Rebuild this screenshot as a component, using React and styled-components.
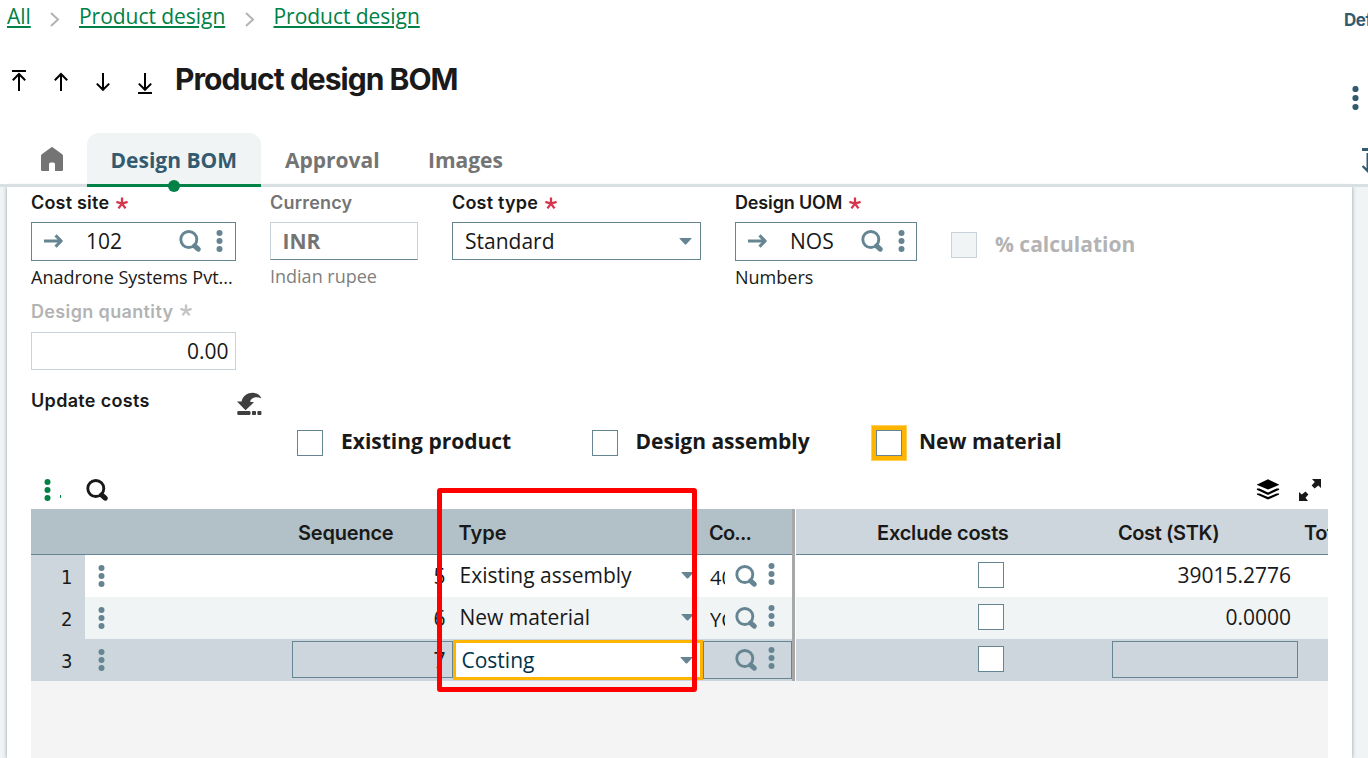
import React from "react";
import styled, { createGlobalStyle, css } from "styled-components";

const c = {
  ink: "#191919",
  slate: "#668592",
  deep: "#335b70",
  green: "#008146",
  line: "#d9e0e4",
  mist: "#f0f4f5",
  pale: "#cdd6dc",
  steel: "#b2c1c8",
  amber: "#ffb500",
  mute: "#747474",
  faint: "#b3b3b3",
};
const head = `Inter, "Liberation Sans", sans-serif`;
const body = `"Open Sans", "Noto Sans", sans-serif`;

const GlobalStyle = createGlobalStyle`
  * { box-sizing: border-box; }
  html, body { margin: 0; padding: 0; overflow: hidden; background: #fff; }
  body { font-family: ${body}; color: ${c.ink}; font-size: 21px; }
  svg { display: block; flex: none; }
`;

const Page = styled.div`
  position: relative;
  width: 1368px;
  height: 758px;
  overflow: hidden;
  display: flex;
  flex-direction: column;
  white-space: nowrap;
`;

/* ---------- header ---------- */
const Breadcrumbs = styled.nav`
  display: flex;
  height: 32px;
  padding-left: 7px;
  line-height: 32px;
  flex: none;
`;
const Crumb = styled.a`
  color: ${c.green};
  font-size: 21px;
  letter-spacing: -0.04px;
  width: ${(p) => p.$w}px;
  text-decoration: underline;
  text-decoration-thickness: 2px;
  text-underline-offset: 2px;
  text-decoration-skip-ink: auto;
`;
const CrumbArrow = styled.span`
  width: ${(p) => p.$w}px;
  padding: 12px 0 0 ${(p) => p.$pl}px;
`;
const HeaderLink = styled.span`
  margin-left: auto;
  width: 24px;
  overflow: hidden;
  font: 700 17px/40px ${head};
  letter-spacing: -0.5px;
  height: 39px;
  color: ${c.deep};
`;
const TitleRow = styled.header`
  display: flex;
  align-items: flex-start;
  height: 101px;
  flex: none;
  padding: 27px 9px 0 12px;
`;
const NavArrows = styled.div`
  display: flex;
  gap: 28px;
  padding-top: 11px;
  width: 163px;
`;
const Title = styled.h1`
  margin: 0;
  font: 700 30px/40px ${head};
  letter-spacing: -0.97px;
  color: #1a1a1a;
`;
const TitleMenu = styled.div`
  margin: 27px 0 0 auto;
`;

const TabBar = styled.div`
  display: flex;
  height: 54px;
  flex: none;
  border-bottom: 3px solid ${c.line};
  position: relative;
  z-index: 2;
`;
const HomeTab = styled.div`
  width: 87px;
  padding: 14px 0 0 41px;
`;
const Tab = styled.div`
  position: relative;
  width: ${(p) => p.$w}px;
  height: 54px;
  padding: 2px 0 0 ${(p) => p.$pad}px;
  line-height: 51px;
  font-weight: 700;
  font-size: 21px;
  color: ${c.mute};
  ${(p) =>
    p.$active &&
    css`
      color: ${c.deep};
      background: ${c.mist};
      border-radius: 12px 12px 0 0;
      box-shadow: inset 0 -3px 0 ${c.green};
      &::after {
        content: "";
        position: absolute;
        left: 81px;
        bottom: -5px;
        width: 12px;
        height: 12px;
        border-radius: 50%;
        background: ${c.green};
      }
    `}
`;
const TabTool = styled.div`
  margin-left: auto;
  width: 6px;
  padding-top: 15px;
  overflow: hidden;
`;

/* ---------- card ---------- */
const Body = styled.main`
  flex: 1;
  background: ${c.mist};
  padding: 0 16px 0 7px;
  min-height: 0;
`;
const Card = styled.section`
  height: 571px;
  background: #fff;
  padding: 0 24px;
  box-shadow: 0 0 4px rgba(0, 30, 50, 0.42);
  display: flex;
  flex-direction: column;
`;
const FieldRow = styled.div`
  display: flex;
  height: ${(p) => p.$h}px;
  flex: none;
`;
const Field = styled.div`
  width: ${(p) => p.$w}px;
  margin-right: ${(p) => p.$mr || 0}px;
`;
const Label = styled.div`
  font: 600 18px/${(p) => p.$lh || 31}px ${head};
  margin-bottom: ${(p) => p.$mb ?? 4}px;
  letter-spacing: ${(p) => p.$ls ?? 0.2}px;
  color: ${(p) => p.$color || c.ink};
  display: flex;
  gap: 7px;
`;
const Box = styled.div`
  display: flex;
  align-items: center;
  height: ${(p) => (p.$lookup ? 39 : 38)}px;
  border: 1px solid ${(p) => (p.$light ? "#c9d2d7" : c.slate)};
  border-bottom-color: ${(p) => (p.$underline ? c.slate : undefined)};
  background: #fff;
  padding: 0 ${(p) => p.$pr ?? 12}px ${(p) => (p.$lookup ? 1 : 0)}px 11.5px;
`;
const Value = styled.span`
  font-size: 21px;
  line-height: 30px;
  font-weight: ${(p) => (p.$bold ? 700 : 400)};
  color: ${(p) => p.$color || c.ink};
  margin-left: ${(p) => p.$ml || 0}px;
`;
const BoxTools = styled.span`
  display: flex;
  align-items: center;
  gap: 15.5px;
  margin-left: auto;
`;
const Hint = styled.div`
  font-size: 18px;
  line-height: 33px;
  color: ${(p) => p.$color || c.ink};
`;
const CheckBox = styled.span`
  width: 26px;
  height: 26px;
  flex: none;
  border: 1px solid ${(p) => (p.$off ? "#c9d2d9" : c.slate)};
  background: ${(p) => (p.$off ? c.mist : "#fff")};
  box-shadow: ${(p) => (p.$focus ? `0 0 0 4px ${c.amber}, 0 0 0 5px #ffcf57` : "none")};
`;
const CheckLabel = styled.span`
  font-weight: 700;
  font-size: 21px;
  line-height: 34px;
  color: ${(p) => p.$color || c.ink};
  margin-left: ${(p) => p.$ml}px;
`;
const DisabledCheck = styled.div`
  display: flex;
  align-items: flex-start;
  padding-top: 45px;
  ${CheckLabel} { line-height: 24px; }
`;
const UpdateRow = styled.div`
  display: flex;
  height: 54px;
  flex: none;
  padding-top: 21px;
  ${Label} { width: 206px; }
  svg { margin-top: 1px; }
`;
const CheckRow = styled.div`
  display: flex;
  height: 36px;
  flex: none;
  padding-left: 266px;
`;
const Check = styled.div`
  display: flex;
  width: ${(p) => p.$w}px;
  ${CheckBox} { margin-top: 6px; }
`;
const Toolbar = styled.div`
  display: flex;
  align-items: center;
  height: 49px;
  flex: none;
  padding: 10px 6px 0 13px;
`;
const Overflow = styled.span`
  width: 1px;
  height: 3px;
  margin: 14px 25px 0 9px;
  background: ${c.green};
`;
const ToolbarEnd = styled.div`
  display: flex;
  align-items: center;
  gap: 19px;
  margin-left: auto;
`;

/* ---------- table ---------- */
const Grid = styled.div`
  flex: 1;
  background: #f4f4f4;
  width: 1297px;
  overflow: hidden;
`;
const Row = styled.div`
  display: grid;
  grid-template-columns: 54px 207px 161px 250px 89px 3px 1px 316px 216px;
  grid-template-rows: ${(p) => (p.$head ? 46 : 42)}px;
  background: ${(p) => p.$bg || "#fff"};
`;
const HeadCell = styled.div`
  font: 600 20px/48px ${head};
  background: ${(p) => (p.$soft ? c.pale : c.steel)};
  border-bottom: 1px solid ${c.slate};
  padding-left: ${(p) => p.$pl || 0}px;
  letter-spacing: ${(p) => p.$ls || 0}px;
  overflow: hidden;
  display: flex;
`;
const HeadText = styled.span`
  width: ${(p) => p.$w}px;
  flex: none;
`;
const Splitter = styled.div`
  background: #a8a8a8;
`;
const Gap = styled.div`
  background: #fff;
`;
const RowNumber = styled.div`
  background: ${c.pale};
  font: 400 20px/44px "DejaVu Sans Condensed", "DejaVu Sans", sans-serif;
  padding-right: 12.5px;
  text-align: right;
`;
const MenuCell = styled.div`
  padding: 10px 0 0 13px;
`;
const frame = css`
  border: 1px solid ${c.slate};
`;
const SeqCell = styled.div`
  height: 37px;
  margin-top: 2px;
  line-height: 36px;
  text-align: right;
  padding-right: 6.5px;
  border: 1px solid transparent;
  ${(p) => p.$edit && frame}
`;
const TypeCell = styled.div`
  display: flex;
  align-items: center;
  line-height: 28px;
  padding: 0 9px 2px 6.5px;
  svg { margin: 1px 0 0 auto; }
  ${(p) =>
    p.$edit &&
    css`
      margin: 1px 0;
      height: 40px;
      border: 3px solid ${c.amber};
      background: #fff;
      color: #003349;
      padding: 0 7.5px 0 5.5px;
      svg { margin-top: 0; }
    `}
`;
const CodeCell = styled.div`
  display: flex;
  height: 38px;
  margin-top: 2px;
  padding: 7px 16px 0 6px;
  border: 1px solid transparent;
  ${(p) => p.$edit && frame}
`;
const CodeText = styled.span`
  width: 15px;
  overflow: hidden;
  font-size: 20px;
  line-height: 26px;
  margin-right: 10px;
`;
const CodeMenu = styled.span`
  margin: -2px 0 0 11px;
`;
const CheckCell = styled.div`
  display: flex;
  padding: 7px 0 0 182px;
`;
const CostCell = styled.div`
  width: 186px;
  height: 37px;
  margin-top: 2px;
  line-height: 35px;
  text-align: right;
  padding-right: 6px;
  border: 1px solid transparent;
  ${(p) => p.$edit && frame}
`;
const Highlight = styled.div`
  position: absolute;
  left: 437px;
  top: 488px;
  width: 260px;
  height: 204px;
  border: 5px solid #fe0000;
  border-radius: 3px;
  z-index: 5;
`;

/* ---------- icons ---------- */
const Kebab = ({ color = c.slate, step = 8, r = 3 }) => (
  <svg width="7" height={step * 2 + 6} viewBox={`0 0 7 ${step * 2 + 6}`} fill={color}>
    {[0, 1, 2].map((i) => (
      <circle key={i} cx="3.5" cy={3 + step * i} r={r} />
    ))}
  </svg>
);
const Lens = ({ color = c.slate }) => (
  <svg width="22" height="22" viewBox="0 0 22 22" fill="none" stroke={color}>
    <circle cx="9.8" cy="9.5" r="8" strokeWidth="2.9" />
    <path d="M15.6 15.9L19.2 19.2" strokeWidth="5" strokeLinecap="round" />
  </svg>
);
const Arrow = ({ bar, down }) => (
  <svg width="14" height="25" viewBox="0 0 14 25" fill="none" stroke="#000" strokeWidth="2">
    {down ? (
      <path d="M7 3V20M0.8 13.6L7 19.8L13.2 13.6" />
    ) : (
      <path d="M7 21V4M0.8 10.2L7 4L13.2 10.2" />
    )}
    {bar && <path d={down ? "M0 23H14" : "M0 1H14"} />}
  </svg>
);
const GoTo = () => (
  <svg width="19" height="14" viewBox="0 0 19 14" fill="none" stroke={c.slate} strokeWidth="3">
    <path d="M0 7H17M11.5 1.4L17.2 7L11.5 12.6" strokeLinejoin="round" />
  </svg>
);
const Chevron = () => (
  <svg width="10" height="15" viewBox="0 0 10 15" fill="none" stroke="#b3b3b3" strokeWidth="2">
    <path d="M1 1L8 7.5L1 14" />
  </svg>
);
const Caret = () => (
  <svg width="13" height="7" viewBox="0 0 13 7" fill={c.slate}>
    <path d="M0.4 0H12.6Q12.4 1 11.4 1.8L7.3 6.2Q6.5 7 5.7 6.2L1.6 1.8Q0.6 1 0.4 0Z" />
  </svg>
);
const Home = () => (
  <svg width="22" height="24" viewBox="0 0 22 24" fill="#747474">
    <path d="M10.1 0.4Q11 -0.2 11.9 0.4L21.2 7.2Q22 7.9 22 8.8V22.8Q22 24 20.8 24H14V17.2Q14 15.5 12.3 15.5H9.7Q8 15.5 8 17.2V24H1.2Q0 24 0 22.8V8.8Q0 7.9 0.8 7.2Z" />
  </svg>
);
const Star = ({ color = "#d5344c" }) => (
  <svg width="12" height="31" viewBox="0 0 12 31" stroke={color} strokeWidth="2.3">
    <path d="M6 16.6V10.6M6 16.6L0.4 14.8M6 16.6L11.6 14.8M6 16.6L2.5 21.4M6 16.6L9.5 21.4" />
  </svg>
);
const Refresh = () => (
  <svg width="25" height="24" viewBox="0 0 25 24" fill="#3f3f3f">
    <path d="M4.6 9.5C5.6 3.6 11 0.6 16 0.8C20.5 1 23.5 3 24.3 6.5C20 4.2 14.4 5 13 9.8L17 10.3L8.5 18.2L0 9.6Z" />
    <rect x="0.3" y="19" width="13.2" height="4" rx="1.2" />
    <rect x="15" y="19" width="4" height="4" rx="0.8" />
    <rect x="20.4" y="19" width="4" height="4" rx="0.8" />
  </svg>
);
const Layers = () => (
  <svg width="24" height="21" viewBox="0 0 24 21">
    <path d="M12 0.3L23.4 5.7L12 10.6L0.6 5.7Z" fill="#000" />
    <path d="M1 9.6H3.4L12 13.4L20.6 9.6H23L23.2 10.7L12 15.9L0.8 10.7Z" fill="#000" />
    <path d="M1 14.4H3.4L12 18.1L20.6 14.4H23L23.2 15.5L12 20.6L0.8 15.5Z" fill="#000" />
  </svg>
);
const Expand = () => (
  <svg width="23" height="22" viewBox="0 0 23 22" fill={c.ink}>
    <path d="M13 0H22V9L19.3 6.5L15.6 9.5L12.6 6.6L15.8 3Z" />
    <path d="M0 13L2.8 15.5L6.5 12.6L9.4 15.4L6.5 18.8L9 22H0Z" />
  </svg>
);
const SortDown = () => (
  <svg width="12" height="26" viewBox="0 0 12 26" fill="none" stroke={c.deep}>
    <path d="M0 1.5H12" strokeWidth="3" />
    <path d="M5.7 5V23M0.6 18L6 23.4L11.4 18" strokeWidth="2.4" />
  </svg>
);

const rows = [
  { n: 1, seq: "5", type: "Existing assembly", code: "40", cost: "39015.2776", bg: "#fff" },
  { n: 2, seq: "6", type: "New material", code: "YC", cost: "0.0000", bg: c.mist },
  { n: 3, seq: "7", type: "Costing", code: "", cost: "", bg: c.pale, edit: true },
];

export default function App() {
  return (
    <Page>
      <GlobalStyle />
      <Breadcrumbs>
        <Crumb $w={24}>All</Crumb>
        <CrumbArrow $w={48} $pl={19}><Chevron /></CrumbArrow>
        <Crumb $w={146}>Product design</Crumb>
        <CrumbArrow $w={48.5} $pl={20}><Chevron /></CrumbArrow>
        <Crumb $w={146}>Product design</Crumb>
        <HeaderLink>Def</HeaderLink>
      </Breadcrumbs>
      <TitleRow>
        <NavArrows>
          <Arrow bar />
          <Arrow />
          <Arrow down />
          <Arrow down bar />
        </NavArrows>
        <Title>Product design BOM</Title>
        <TitleMenu><Kebab color={c.deep} step={9} r={3.1} /></TitleMenu>
      </TitleRow>
      <TabBar>
        <HomeTab><Home /></HomeTab>
        <Tab $active $w={174} $pad={23.5}>Design BOM</Tab>
        <Tab $w={143} $pad={24}>Approval</Tab>
        <Tab $w={120} $pad={24}>Images</Tab>
        <TabTool><SortDown /></TabTool>
      </TabBar>
      <Body>
        <Card>
          <FieldRow $h={107}>
            <Field $w={205} $mr={34}>
              <Label>Cost site<Star /></Label>
              <Box $lookup>
                <GoTo />
                <Value $ml={23.5}>102</Value>
                <BoxTools><Lens /><Kebab /></BoxTools>
              </Box>
              <Hint>Anadrone Systems Pvt...</Hint>
            </Field>
            <Field $w={148} $mr={34}>
              <Label $color={c.mute}>Currency</Label>
              <Box $light $underline>
                <Value $bold $color={c.mute}>INR</Value>
              </Box>
              <Hint $color="#808080">Indian rupee</Hint>
            </Field>
            <Field $w={249} $mr={34}>
              <Label>Cost type<Star /></Label>
              <Box $pr={8}>
                <Value $ml={0.5}>Standard</Value>
                <BoxTools><Caret /></BoxTools>
              </Box>
            </Field>
            <Field $w={182} $mr={34}>
              <Label $ls={-0.15}>Design UOM<Star /></Label>
              <Box $lookup $pr={11}>
                <GoTo />
                <Value $ml={23.5}>NOS</Value>
                <BoxTools><Lens /><Kebab /></BoxTools>
              </Box>
              <Hint>Numbers</Hint>
            </Field>
            <DisabledCheck>
              <CheckBox $off />
              <CheckLabel $ml={18} $color={c.faint}>% calculation</CheckLabel>
            </DisabledCheck>
          </FieldRow>
          <FieldRow $h={76}>
            <Field $w={205}>
              <Label $lh={36} $mb={2} $ls={0.36} $color={c.faint}>
                Design quantity<Star color="#c4c4c4" />
              </Label>
              <Box $light $pr={6.5}>
                <BoxTools><Value>0.00</Value></BoxTools>
              </Box>
            </Field>
          </FieldRow>
          <UpdateRow>
            <Label $lh={20} $ls={0.33}>Update costs</Label>
            <Refresh />
          </UpdateRow>
          <CheckRow>
            <Check $w={295}><CheckBox /><CheckLabel $ml={18}>Existing product</CheckLabel></Check>
            <Check $w={284}><CheckBox /><CheckLabel $ml={17.5}>Design assembly</CheckLabel></Check>
            <Check $w={200}><CheckBox $focus /><CheckLabel $ml={17}>New material</CheckLabel></Check>
          </CheckRow>
          <Toolbar>
            <Kebab color={c.green} />
            <Overflow />
            <Lens color={c.ink} />
            <ToolbarEnd><Layers /><Expand /></ToolbarEnd>
          </Toolbar>
          <Grid>
            <Row $head>
              <HeadCell />
              <HeadCell />
              <HeadCell $pl={6} $ls={-0.2}>Sequence</HeadCell>
              <HeadCell $pl={5.5}>Type</HeadCell>
              <HeadCell $pl={6} $ls={-0.8}>Co...</HeadCell>
              <Splitter />
              <Gap />
              <HeadCell $soft $pl={81} $ls={-0.2}>Exclude costs</HeadCell>
              <HeadCell $soft $pl={6} $ls={-0.4}>
                <HeadText $w={186}>Cost (STK)</HeadText>
                <HeadText $w={60}>Total</HeadText>
              </HeadCell>
            </Row>
            {rows.map((r) => (
              <Row key={r.n} $bg={r.bg}>
                <RowNumber>{r.n}</RowNumber>
                <MenuCell><Kebab /></MenuCell>
                <SeqCell $edit={r.edit}>{r.seq}</SeqCell>
                <TypeCell $edit={r.edit}>{r.type}<Caret /></TypeCell>
                <CodeCell $edit={r.edit}>
                  <CodeText>{r.code}</CodeText>
                  <Lens />
                  <CodeMenu><Kebab /></CodeMenu>
                </CodeCell>
                <Splitter />
                <Gap />
                <CheckCell><CheckBox /></CheckCell>
                <CostCell $edit={r.edit}>{r.cost}</CostCell>
              </Row>
            ))}
          </Grid>
        </Card>
      </Body>
      <Highlight />
    </Page>
  );
}
